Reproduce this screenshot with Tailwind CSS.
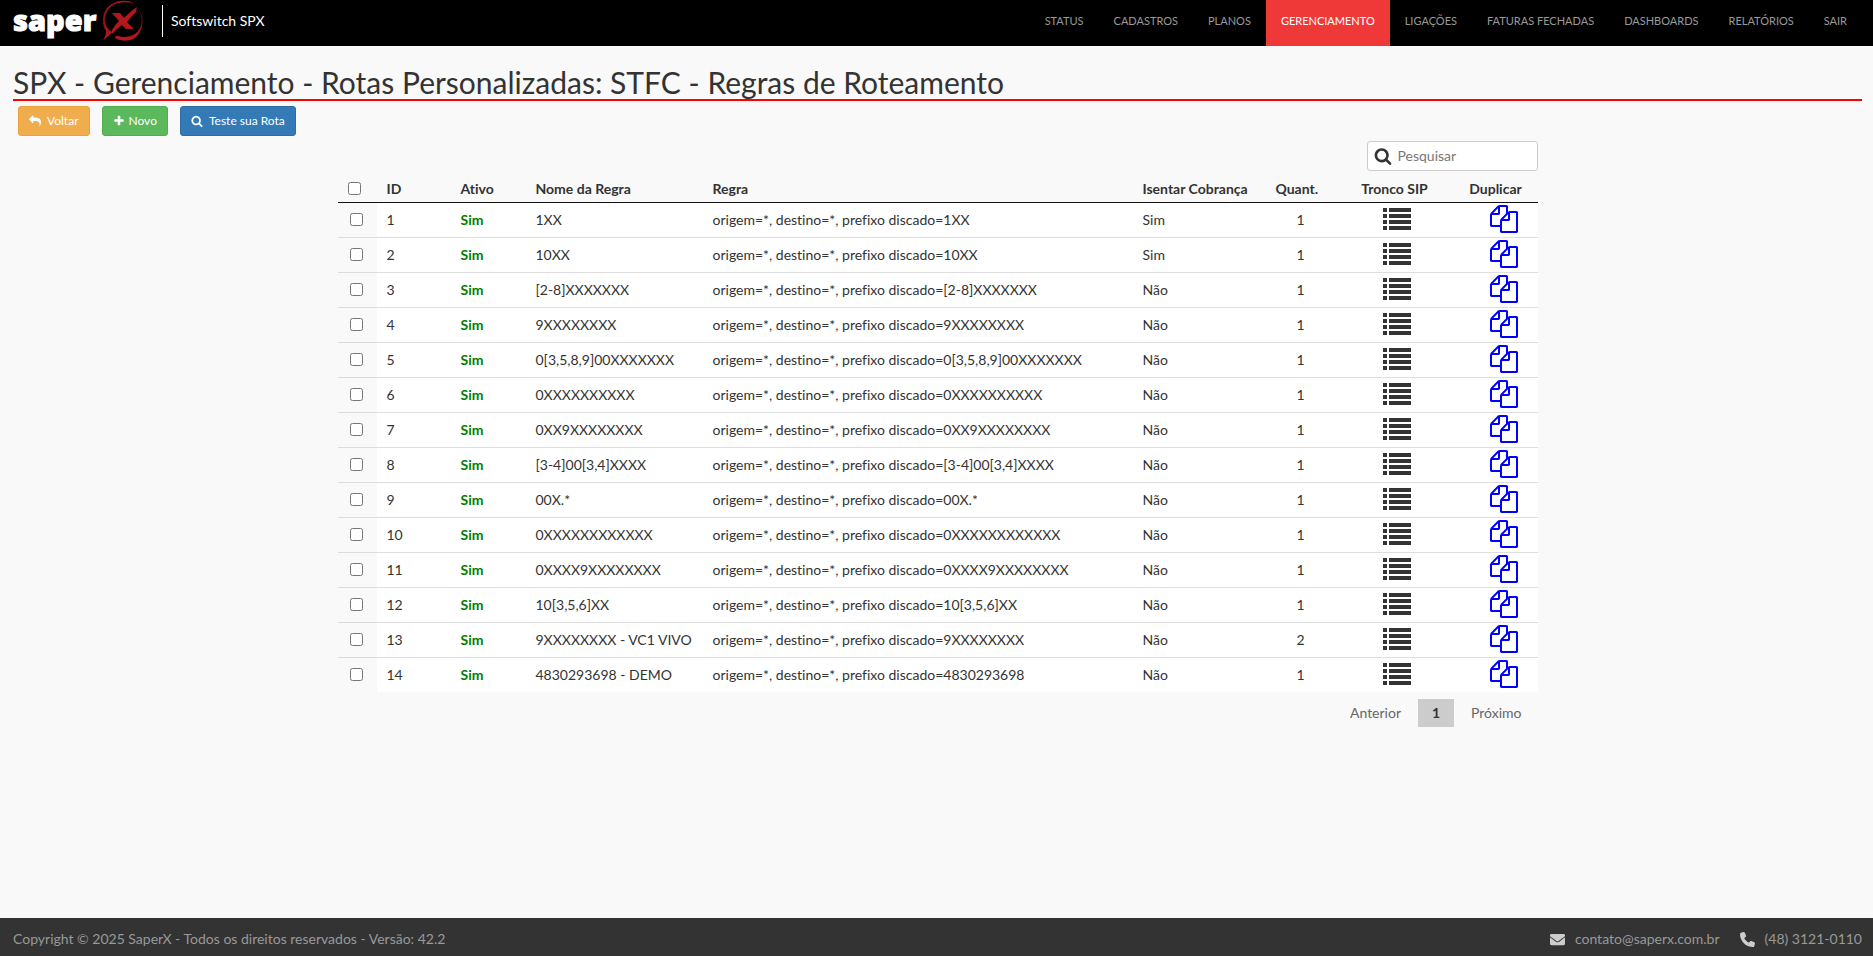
<!DOCTYPE html>
<html lang="pt-BR">
<head>
  <meta charset="UTF-8" />
  <meta name="viewport" content="width=device-width, initial-scale=1.0"/>
  <title>SaperX - Softswitch SPX</title>
  <script src="https://cdn.jsdelivr.net/npm/@tailwindcss/browser@4"></script>
</head>
<body class="min-h-screen flex flex-col bg-[#f9f9f9] text-[#333] text-sm font-['Lato',sans-serif] [font-variant-ligatures:none]">

  <!-- icons -->
  <svg class="hidden">
    <symbol id="i-search" viewBox="0 0 1792 1792"><path d="M1216 832q0-185-131.5-316.5t-316.5-131.5-316.5 131.5-131.5 316.5 131.5 316.5 316.5 131.5 316.5-131.5 131.5-316.5zm512 832q0 52-38 90t-90 38q-54 0-90-38l-343-342q-179 124-399 124-143 0-273.5-55.5t-225-150-150-225-55.5-273.5 55.5-273.5 150-225 225-150 273.5-55.5 273.5 55.5 225 150 150 225 55.5 273.5q0 220-124 399l343 343q37 37 37 90z"/></symbol>
    <symbol id="i-plus" viewBox="0 0 1792 1792"><path d="M1600 736v192q0 40-28 68t-68 28h-416v416q0 40-28 68t-68 28h-192q-40 0-68-28t-28-68v-416h-416q-40 0-68-28t-28-68v-192q0-40 28-68t68-28h416v-416q0-40 28-68t68-28h192q40 0 68 28t28 68v416h416q40 0 68 28t28 68z"/></symbol>
    <symbol id="i-reply" viewBox="0 0 1792 1792"><path transform="matrix(-1 0 0 1 1792 0)" d="M1792 640q0 26-19 45l-512 512q-19 19-45 19t-45-19-19-45v-256h-224q-98 0-175.5 6t-154 21.5-133 42.5-105.5 69.5-80 101-48.5 138.5-17.5 181q0 55 5 123 0 6 2.5 23.5t2.5 26.5q0 15-8.5 25t-23.5 10q-16 0-28-17-7-9-13-22t-13.5-30-10.5-24q-127-285-127-451 0-199 53-333 162-403 875-403h224v-256q0-26 19-45t45-19 45 19l512 512q19 19 19 45z"/></symbol>
    <symbol id="i-list" viewBox="0 0 28 22"><path d="M0 0h4v4H0zM6 0h22v4H6zM0 6h4v4H0zM6 6h22v4H6zM0 12h4v4H0zM6 12h22v4H6zM0 18h4v4H0zM6 18h22v4H6z"/></symbol>
    <symbol id="i-copy" viewBox="0 0 1792 1792"><path d="M1696 384q40 0 68 28t28 68v1216q0 40-28 68t-68 28h-960q-40 0-68-28t-28-68v-288h-544q-40 0-68-28t-28-68v-672q0-40 20-88t48-76l408-408q28-28 76-48t88-20h416q40 0 68 28t28 68v328q68-40 128-40h416zm-544 213l-299 299h299v-299zm-640-384l-299 299h299v-299zm196 647l316-316v-416h-384v416q0 40-28 68t-68 28h-416v640h512v-256q0-40 20-88t48-76zm956 804v-1152h-384v416q0 40-28 68t-68 28h-416v640h896z"/></symbol>
    <symbol id="i-mail" viewBox="0 0 512 512"><path d="M502.3 190.8c3.9-3.1 9.7-.2 9.7 4.7V400c0 26.5-21.5 48-48 48H48c-26.5 0-48-21.5-48-48V195.6c0-5 5.7-7.8 9.7-4.7 22.4 17.4 52.1 39.5 154.1 113.6 21.1 15.4 56.7 47.8 92.2 47.6 35.7.3 72-32.8 92.3-47.6 102-74.1 131.6-96.3 154-113.7zM256 320c23.2.4 56.6-29.2 73.4-41.4 132.7-96.3 142.8-104.7 173.4-128.7 5.8-4.5 9.2-11.5 9.2-18.9v-19c0-26.5-21.5-48-48-48H48c-26.5 0-48 21.5-48 48v19c0 7.4 3.4 14.3 9.2 18.9 30.6 23.9 40.7 32.4 173.4 128.7 16.8 12.2 50.2 41.8 73.4 41.4z"/></symbol>
    <symbol id="i-phone" viewBox="0 0 512 512"><path d="M164.9 24.6c-7.7-18.6-28-28.5-47.4-23.2l-88 24C12.1 30.2 0 46 0 64C0 311.4 200.6 512 448 512c18 0 33.8-12.1 38.6-29.5l24-88c5.3-19.4-4.6-39.7-23.2-47.4l-96-40c-16.3-6.8-35.2-2.1-46.3 11.6L304.7 368C234.3 334.7 177.3 277.7 144 207.3L193.3 167c13.7-11.2 18.4-30 11.6-46.3l-40-96z"/></symbol>
  </svg>

  <header class="bg-black h-[46px] flex justify-between pl-[13px] pr-[11px]">
    <div class="flex items-center">
      <a href="#" aria-label="SaperX">
        <svg class="w-[132px] h-[46px]" viewBox="0 0 132 46">
          <defs>
            <linearGradient id="red" x1="0" y1="0" x2="0" y2="1">
              <stop offset="0" stop-color="#b3161d"/>
              <stop offset=".5" stop-color="#8c1016"/>
              <stop offset="1" stop-color="#c4161e"/>
            </linearGradient>
          </defs>
          <text x="0" y="31" class="fill-white stroke-white font-['Open_Sans',sans-serif] font-extrabold text-[29px]" stroke-width="1">saper</text>
          <path fill="url(#red)" d="M121 3C115 0 107 0 101 3 94 6 90 13 90 20c0 5 1 8 3 11 0 4-1 6-3 9.500l10-8.500c-5-2-8-6-8-12 0-7 4-13 10-16 6-2 12-2 19-1z"/>
          <path fill="url(#red)" d="M125 8c5 8 5 17 0 23-5 6-13 7-20 5-3-1-4 2-1 3 8 3 16 2 21-4 6-8 6-19 0-27z"/>
          <path fill="#b3161d" d="M99 13h8l4 5c4-4 8-8 13-11l-1 5c-3 3-6 6-9 10l7 7h-8l-4-4c-4 3-7 6-10 9v-4c2-3 4-6 7-9z"/>
        </svg>
      </a>
      <div class="ml-[17px] h-8 border-l border-white pl-2 mb-1 flex items-center text-white">Softswitch SPX</div>
    </div>
    <nav class="flex text-[11px] text-[#999]">
      <a href="#" class="px-[15px] pt-3 leading-[18px]">STATUS</a>
      <a href="#" class="px-[15px] pt-3 leading-[18px]">CADASTROS</a>
      <a href="#" class="px-[15px] pt-3 leading-[18px]">PLANOS</a>
      <a href="#" class="px-[15px] pt-3 leading-[18px] bg-[#ef3939] text-white">GERENCIAMENTO</a>
      <a href="#" class="px-[15px] pt-3 leading-[18px]">LIGAÇÕES</a>
      <a href="#" class="px-[15px] pt-3 leading-[18px]">FATURAS FECHADAS</a>
      <a href="#" class="px-[15px] pt-3 leading-[18px]">DASHBOARDS</a>
      <a href="#" class="px-[15px] pt-3 leading-[18px]">RELATÓRIOS</a>
      <a href="#" class="px-[15px] pt-3 leading-[18px]">SAIR</a>
    </nav>
  </header>

  <main class="flex-1 pl-[13px] pr-[11px] pt-5">
    <h1 class="text-[30px] leading-[33px] border-b-2 border-[red]">SPX - Gerenciamento - Rotas Personalizadas: STFC - Regras de Roteamento</h1>

    <div class="flex mt-[5px] pl-[5px] gap-3 text-xs text-white">
      <button class="h-[30px] px-[10px] rounded-[3px] border border-[#eea236] bg-[#f0ad4e] flex items-center gap-[6px]"><svg class="size-3 fill-current"><use href="#i-reply"/></svg>Voltar</button>
      <button class="h-[30px] px-[10px] rounded-[3px] border border-[#4cae4c] bg-[#5cb85c] flex items-center gap-1"><svg class="size-3 fill-current"><use href="#i-plus"/></svg>Novo</button>
      <button class="h-[30px] px-[10px] rounded-[3px] border border-[#2e6da4] bg-[#337ab7] flex items-center gap-[6px]"><svg class="size-3 fill-current"><use href="#i-search"/></svg>Teste sua Rota</button>
    </div>

    <div class="max-w-[1200px] mx-auto mt-[5px]">
      <div class="flex justify-end">
        <label class="flex items-center gap-1 w-[171px] h-[30px] pl-[6px] bg-white border border-[#ccc] rounded-[3px]">
          <svg class="size-[18px] fill-[#333] shrink-0"><use href="#i-search"/></svg>
          <input type="search" aria-label="Pesquisar" placeholder="Pesquisar" class="w-full pl-[2px] outline-none placeholder:text-[#777]"/>
        </label>
      </div>

      <table class="w-full table-fixed">
        <colgroup>
          <col class="w-[39px]"/><col class="w-[74px]"/><col class="w-[75px]"/><col class="w-[177px]"/><col/>
          <col class="w-[133px]"/><col class="w-[70px]"/><col class="w-[122px]"/><col class="w-[80px]"/>
        </colgroup>
        <thead>
          <tr class="h-[31px] border-b border-[#111] text-left whitespace-nowrap">
            <th class="pl-[10px] pt-[5px]"><input type="checkbox" aria-label="Selecionar todos" class="block size-[13px]"/></th>
            <th class="pl-[10px] pt-[5px]">ID</th>
            <th class="pl-[10px] pt-[5px]">Ativo</th>
            <th class="pl-[10px] pt-[5px]">Nome da Regra</th>
            <th class="pl-[10px] pt-[5px]">Regra</th>
            <th class="pl-[10px] pt-[5px]">Isentar Cobrança</th>
            <th class="pl-[10px] pr-[18px] pt-[5px] text-center">Quant.</th>
            <th class="pr-[4px] pt-[5px] text-center">Tronco SIP</th>
            <th class="pr-[4px] pt-[5px] text-center">Duplicar</th>
          </tr>
        </thead>
        <tbody id="rules"></tbody>
      </table>

      <nav class="flex justify-end mt-[7px] leading-7 text-[#666]">
        <button class="px-[17px]">Anterior</button>
        <button class="w-9 bg-[#ccc] font-bold text-[#333]">1</button>
        <button class="pl-[17px] pr-4">Próximo</button>
      </nav>
    </div>
  </main>

  <footer class="bg-[#333] text-[#999] h-[38px] pl-[13px] pr-[11px] pt-1 flex items-center justify-between">
    <p>Copyright © 2025 SaperX - Todos os direitos reservados - Versão: 42.2</p>
    <div class="flex gap-5">
      <a href="mailto:contato@saperx.com.br" class="flex items-center gap-[10px]"><svg class="size-[15px] fill-[#ccc]"><use href="#i-mail"/></svg>contato@saperx.com.br</a>
      <a href="tel:+554831210110" class="flex items-center gap-[10px]"><svg class="size-[15px] fill-[#ccc]"><use href="#i-phone"/></svg>(48) 3121-0110</a>
    </div>
  </footer>

  <script>
    // [nome, prefixo, isentar, quantidade]
    const rules = [
      ["1XX", "1XX", "Sim", 1],
      ["10XX", "10XX", "Sim", 1],
      ["[2-8]XXXXXXX", "[2-8]XXXXXXX", "Não", 1],
      ["9XXXXXXXX", "9XXXXXXXX", "Não", 1],
      ["0[3,5,8,9]00XXXXXXX", "0[3,5,8,9]00XXXXXXX", "Não", 1],
      ["0XXXXXXXXXX", "0XXXXXXXXXX", "Não", 1],
      ["0XX9XXXXXXXX", "0XX9XXXXXXXX", "Não", 1],
      ["[3-4]00[3,4]XXXX", "[3-4]00[3,4]XXXX", "Não", 1],
      ["00X.*", "00X.*", "Não", 1],
      ["0XXXXXXXXXXXX", "0XXXXXXXXXXXX", "Não", 1],
      ["0XXXX9XXXXXXXX", "0XXXX9XXXXXXXX", "Não", 1],
      ["10[3,5,6]XX", "10[3,5,6]XX", "Não", 1],
      ["9XXXXXXXX - VC1 VIVO", "9XXXXXXXX", "Não", 2],
      ["4830293698 - DEMO", "4830293698", "Não", 1]
    ];

    document.getElementById("rules").innerHTML = rules.map(([name, prefix, free, count], i) => `
      <tr class="h-[35px] bg-white border-b border-[#ddd] last:border-b-0 whitespace-nowrap">
        <td class="pl-3 bg-[#f9f9f9]"><input type="checkbox" aria-label="Selecionar regra ${i + 1}" class="block size-[13px]"/></td>
        <td class="pl-[10px]">${i + 1}</td>
        <td class="pl-[10px] font-bold text-[green]">Sim</td>
        <td class="pl-[10px]">${name}</td>
        <td class="pl-[10px]">origem=*, destino=*, prefixo discado=${prefix}</td>
        <td class="pl-[10px]">${free}</td>
        <td class="text-center">${count}</td>
        <td class="pb-[2px]"><a href="#" aria-label="Tronco SIP" class="block w-7 mx-auto"><svg class="w-7 h-[22px] fill-[#333]"><use href="#i-list"/></svg></a></td>
        <td class="pl-3 pb-[2px]"><a href="#" aria-label="Duplicar" class="block w-7 mx-auto"><svg class="size-7 fill-[blue]"><use href="#i-copy"/></svg></a></td>
      </tr>`).join("");
  </script>
</body>
</html>
